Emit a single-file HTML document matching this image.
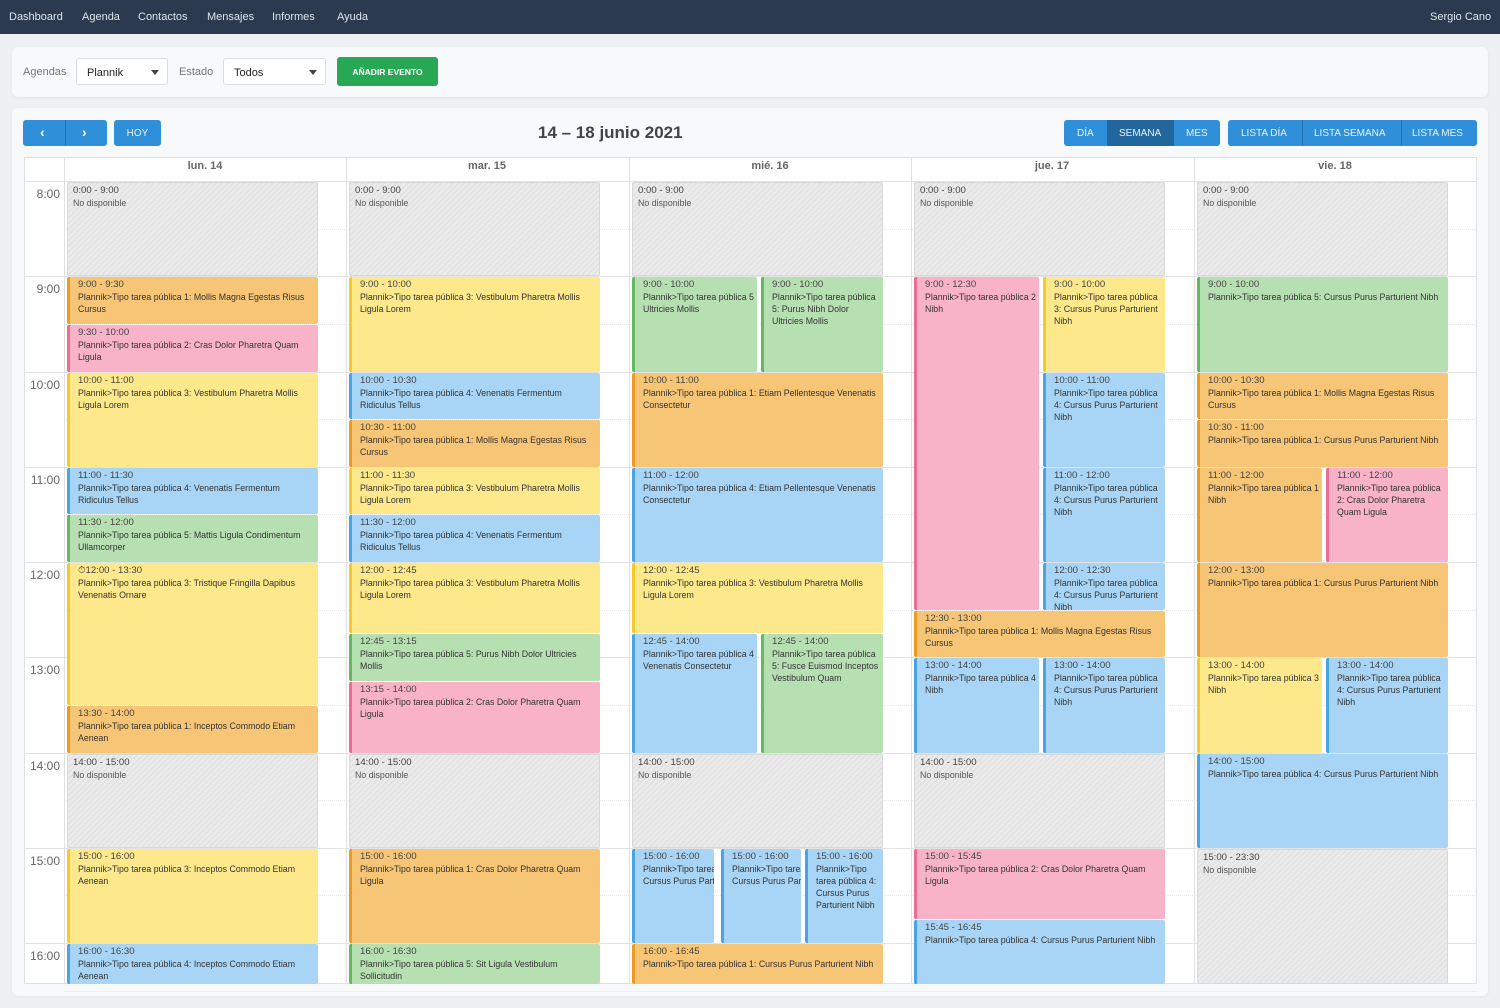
<!DOCTYPE html>
<html><head><meta charset="utf-8">
<style>
*{box-sizing:border-box;margin:0;padding:0}
body{width:1500px;height:1008px;background:#eef0f2;font-family:"Liberation Sans",sans-serif;position:relative;overflow:hidden}
.nav{position:absolute;left:0;top:0;width:1500px;height:34px;background:#2b3a4f;color:#dfe5ec;font-size:11px}
.nav span{position:absolute;top:11px}
.card{position:absolute;background:#f8f9fa;border-radius:6px;box-shadow:0 1px 3px rgba(0,0,0,.06)}
.lbl{position:absolute;font-size:11px;color:#777}
.sel{position:absolute;height:27px;background:#fff;border:1px solid #ddd;border-radius:3px;font-size:11px;color:#222;padding:8px 0 0 10px}
.sel:after{content:"";position:absolute;right:8px;top:11px;border:4px solid transparent;border-top:5px solid #444}
.btn{position:absolute;background:#2f8fd8;color:#e8f3fc;font-size:10px;text-align:center;border-radius:3px}
.cal{position:absolute;left:24px;top:157px;width:1453px;height:827px;border:1px solid #e0e0e0;background:#fff}
.hl{position:absolute;left:24px;width:1453px;height:0;border-top:1px solid #e3e3e3}
.hh{position:absolute;left:64px;width:1413px;height:0;border-top:1px dotted #e6e6e6}
.vl{position:absolute;top:157px;height:827px;width:0;border-left:1px solid #e0e0e0}
.dh{position:absolute;top:160px;font-size:11px;font-weight:bold;color:#666;text-align:center;width:282px}
.tl{position:absolute;left:24px;width:36px;text-align:right;font-size:12px;color:#666}
.ev{position:absolute;overflow:hidden;font-size:8.8px;line-height:12px;color:#333;padding:1px 2px 0 8px;border-left:3px solid;border-radius:2px}
.ev b{font-weight:normal;font-size:9.6px;color:#444}
.nw{white-space:nowrap}
.o{background:#f7c576;border-color:#ee9a1e}
.y{background:#fde88c;border-color:#f6c82a}
.p{background:#f8b3c9;border-color:#ec6c93}
.bl{background:#a8d5f6;border-color:#4aa3e4}
.g{background:#b7e0b2;border-color:#63b862}
.x{background:repeating-linear-gradient(135deg,#e3e3e3 0 2px,#ececec 2px 4px);border:1px solid #d8d8d8;border-left:1px solid #d8d8d8;color:#555;padding-left:5px}
</style></head><body>
<div class="nav"><span style="left:9px">Dashboard</span><span style="left:82px">Agenda</span><span style="left:138px">Contactos</span><span style="left:207px">Mensajes</span><span style="left:272px">Informes</span><span style="left:337px">Ayuda</span><span style="left:1430px">Sergio Cano</span></div>
<div class="card" style="left:12px;top:47px;width:1476px;height:50px"></div>
<div class="lbl" style="left:23px;top:66px">Agendas</div>
<div class="sel" style="left:76px;top:58px;width:92px">Plannik</div>
<div class="lbl" style="left:179px;top:66px">Estado</div>
<div class="sel" style="left:223px;top:58px;width:103px">Todos</div>
<div class="btn" style="left:337px;top:57px;width:101px;height:29px;background:#28a855;color:#fff;font-weight:bold;font-size:8.5px;padding-top:10px">AÑADIR EVENTO</div>
<div class="card" style="left:12px;top:108px;width:1476px;height:888px"></div>
<div class="btn" style="left:23px;top:120px;width:84px;height:26px"></div>
<div style="position:absolute;left:65px;top:120px;height:26px;border-left:1px solid #2878b8"></div>
<div style="position:absolute;left:40px;top:124px;color:#fff;font-size:14px;font-weight:bold">&lsaquo;</div>
<div style="position:absolute;left:82px;top:124px;color:#fff;font-size:14px;font-weight:bold">&rsaquo;</div>
<div class="btn" style="left:114px;top:120px;width:47px;height:26px;padding-top:8px">HOY</div>
<div style="position:absolute;left:538px;top:123px;font-size:17px;font-weight:bold;color:#444">14 – 18 junio 2021</div>
<div class="btn" style="left:1064px;top:120px;width:156px;height:26px"></div>
<div class="btn" style="left:1107px;top:120px;width:67px;height:26px;background:#22669e;border-radius:0"></div>
<span style="position:absolute;top:128px;left:1077px;font-size:10px;color:#e8f3fc">DÍA</span>
<span style="position:absolute;top:128px;left:1119px;font-size:10px;color:#e8f3fc">SEMANA</span>
<span style="position:absolute;top:128px;left:1186px;font-size:10px;color:#e8f3fc">MES</span>
<div class="btn" style="left:1228px;top:120px;width:249px;height:26px"></div>
<div style="position:absolute;left:1302px;top:120px;height:26px;border-left:1px solid #2878b8"></div>
<div style="position:absolute;left:1401px;top:120px;height:26px;border-left:1px solid #2878b8"></div>
<span style="position:absolute;top:128px;left:1241px;font-size:10px;color:#e8f3fc">LISTA DÍA</span>
<span style="position:absolute;top:128px;left:1314px;font-size:10px;color:#e8f3fc">LISTA SEMANA</span>
<span style="position:absolute;top:128px;left:1412px;font-size:10px;color:#e8f3fc">LISTA MES</span>
<div class="cal"></div>
<div id="g"></div>
<script>
var H='',X=[64,346,629,911,1194],D=['lun. 14','mar. 15','mié. 16','jue. 17','vie. 18'];
function Y(h){return 181+(h-8)*95.25}
H+='<div class="hl" style="top:181px"></div>';
for(var h=8;h<17;h++){var t=Y(h);H+='<div class="hl" style="top:'+t+'px"></div><div class="hh" style="top:'+(t+47.6)+'px"></div><div class="tl" style="top:'+(t+6)+'px">'+h+':00</div>';}
H+='<div class="vl" style="left:64px"></div>';
for(var i=0;i<5;i++){if(i)H+='<div class="vl" style="left:'+X[i]+'px"></div>';H+='<div class="dh" style="left:'+X[i]+'px">'+D[i]+'</div>';}
var P='Plannik&gt;Tipo tarea pública ';
function E(d,s,e,c,tm,tx,part,nw){var x=X[d]+3,w=251;if(part==1){w=125;nw=1}else if(part==2){x+=129;w=122}else if(part&&part.length){x+=part[0];w=part[1]}
var y1=Y(s),y2=Math.min(Y(e),984);
H+='<div class="ev '+c+(nw?' nw':'')+'" style="left:'+x+'px;top:'+(y1+1)+'px;width:'+w+'px;height:'+(y2-y1-1)+'px"><b>'+tm+'</b><br>'+tx+'</div>';}
var N='No disponible';
for(var i=0;i<5;i++){E(i,8,9,'x','0:00 - 9:00',N);if(i<4)E(i,14,15,'x','14:00 - 15:00',N);}
E(0,9,9.5,'o','9:00 - 9:30',P+'1: Mollis Magna Egestas Risus Cursus');
E(0,9.5,10,'p','9:30 - 10:00',P+'2: Cras Dolor Pharetra Quam Ligula');
E(0,10,11,'y','10:00 - 11:00',P+'3: Vestibulum Pharetra Mollis Ligula Lorem');
E(0,11,11.5,'bl','11:00 - 11:30',P+'4: Venenatis Fermentum Ridiculus Tellus');
E(0,11.5,12,'g','11:30 - 12:00',P+'5: Mattis Ligula Condimentum Ullamcorper');
E(0,12,13.5,'y','⏱12:00 - 13:30',P+'3: Tristique Fringilla Dapibus Venenatis Ornare');
E(0,13.5,14,'o','13:30 - 14:00',P+'1: Inceptos Commodo Etiam Aenean');
E(0,15,16,'y','15:00 - 16:00',P+'3: Inceptos Commodo Etiam Aenean');
E(0,16,16.5,'bl','16:00 - 16:30',P+'4: Inceptos Commodo Etiam Aenean');
E(1,9,10,'y','9:00 - 10:00',P+'3: Vestibulum Pharetra Mollis Ligula Lorem');
E(1,10,10.5,'bl','10:00 - 10:30',P+'4: Venenatis Fermentum Ridiculus Tellus');
E(1,10.5,11,'o','10:30 - 11:00',P+'1: Mollis Magna Egestas Risus Cursus');
E(1,11,11.5,'y','11:00 - 11:30',P+'3: Vestibulum Pharetra Mollis Ligula Lorem');
E(1,11.5,12,'bl','11:30 - 12:00',P+'4: Venenatis Fermentum Ridiculus Tellus');
E(1,12,12.75,'y','12:00 - 12:45',P+'3: Vestibulum Pharetra Mollis Ligula Lorem');
E(1,12.75,13.25,'g','12:45 - 13:15',P+'5: Purus Nibh Dolor Ultricies Mollis');
E(1,13.25,14,'p','13:15 - 14:00',P+'2: Cras Dolor Pharetra Quam Ligula');
E(1,15,16,'o','15:00 - 16:00',P+'1: Cras Dolor Pharetra Quam Ligula');
E(1,16,16.5,'g','16:00 - 16:30',P+'5: Sit Ligula Vestibulum Sollicitudin');
E(2,9,10,'g','9:00 - 10:00',P+'5<br>Ultricies Mollis',1);
E(2,9,10,'g','9:00 - 10:00',P+'<br>5: Purus Nibh Dolor Ultricies Mollis',2);
E(2,10,11,'o','10:00 - 11:00',P+'1: Etiam Pellentesque Venenatis Consectetur');
E(2,11,12,'bl','11:00 - 12:00',P+'4: Etiam Pellentesque Venenatis Consectetur');
E(2,12,12.75,'y','12:00 - 12:45',P+'3: Vestibulum Pharetra Mollis Ligula Lorem');
E(2,12.75,14,'bl','12:45 - 14:00',P+'4<br>Venenatis Consectetur',1);
E(2,12.75,14,'g','12:45 - 14:00',P+'<br>5: Fusce Euismod Inceptos Vestibulum Quam',2);
E(2,15,16,'bl','15:00 - 16:00','Plannik&gt;Tipo tarea pública<br>Cursus Purus Parturient Nibh',[0,82],1);
E(2,15,16,'bl','15:00 - 16:00','Plannik&gt;Tipo tarea pública<br>Cursus Purus Parturient Nibh',[89,80],1);
E(2,15,16,'bl','15:00 - 16:00','Plannik&gt;Tipo<br>tarea pública 4:<br>Cursus Purus<br>Parturient Nibh',[173,78]);
E(2,16,16.75,'o','16:00 - 16:45',P+'1: Cursus Purus Parturient Nibh');
E(3,9,12.5,'p','9:00 - 12:30',P+'2<br>Nibh',1);
E(3,9,10,'y','9:00 - 10:00',P+'<br>3: Cursus Purus Parturient<br>Nibh',2);
E(3,10,11,'bl','10:00 - 11:00',P+'<br>4: Cursus Purus Parturient<br>Nibh',2);
E(3,11,12,'bl','11:00 - 12:00',P+'<br>4: Cursus Purus Parturient<br>Nibh',2);
E(3,12,12.5,'bl','12:00 - 12:30',P+'<br>4: Cursus Purus Parturient<br>Nibh',2);
E(3,12.5,13,'o','12:30 - 13:00',P+'1: Mollis Magna Egestas Risus Cursus');
E(3,13,14,'bl','13:00 - 14:00',P+'4<br>Nibh',1);
E(3,13,14,'bl','13:00 - 14:00',P+'<br>4: Cursus Purus Parturient<br>Nibh',2);
E(3,15,15.75,'p','15:00 - 15:45',P+'2: Cras Dolor Pharetra Quam Ligula');
E(3,15.75,16.75,'bl','15:45 - 16:45',P+'4: Cursus Purus Parturient Nibh');
E(4,9,10,'g','9:00 - 10:00',P+'5: Cursus Purus Parturient Nibh');
E(4,10,10.5,'o','10:00 - 10:30',P+'1: Mollis Magna Egestas Risus Cursus');
E(4,10.5,11,'o','10:30 - 11:00',P+'1: Cursus Purus Parturient Nibh');
E(4,11,12,'o','11:00 - 12:00',P+'1<br>Nibh',1);
E(4,11,12,'p','11:00 - 12:00',P+'<br>2: Cras Dolor Pharetra<br>Quam Ligula',2);
E(4,12,13,'o','12:00 - 13:00',P+'1: Cursus Purus Parturient Nibh');
E(4,13,14,'y','13:00 - 14:00',P+'3<br>Nibh',1);
E(4,13,14,'bl','13:00 - 14:00',P+'<br>4: Cursus Purus Parturient<br>Nibh',2);
E(4,14,15,'bl','14:00 - 15:00',P+'4: Cursus Purus Parturient Nibh');
E(4,15,17,'x','15:00 - 23:30',N);
document.getElementById('g').innerHTML=H;
</script>
</body></html>
